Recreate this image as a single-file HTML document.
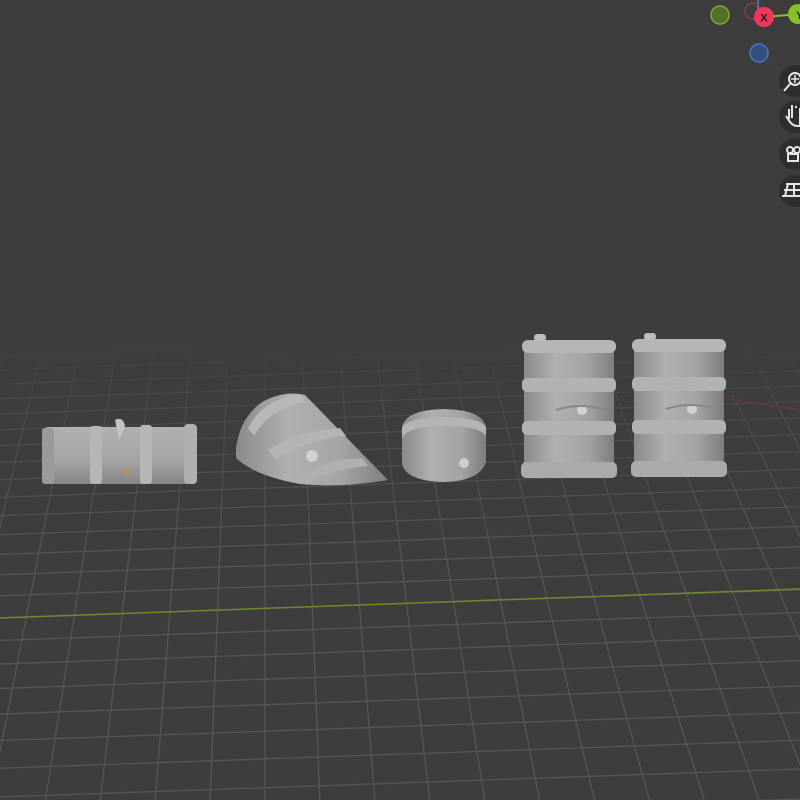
<!DOCTYPE html>
<html><head><meta charset="utf-8"><style>
html,body{margin:0;padding:0;background:#3d3d3d;width:800px;height:800px;overflow:hidden;font-family:"Liberation Sans",sans-serif}
svg{position:absolute;left:0;top:0}
</style></head><body>
<svg id="s" width="800" height="800" viewBox="0 0 800 800" xmlns="http://www.w3.org/2000/svg">
<defs>
<linearGradient id="fade" x1="0" y1="0" x2="0" y2="1">
<stop offset="0" stop-color="#fff" stop-opacity="0"/>
<stop offset="0.12" stop-color="#fff" stop-opacity="0.5"/>
<stop offset="0.5" stop-color="#fff" stop-opacity="1"/>
</linearGradient>
<mask id="m"><rect x="0" y="345" width="800" height="455" fill="url(#fade)"/></mask>
<linearGradient id="cyl" x1="0" y1="0" x2="1" y2="0">
<stop offset="0" stop-color="#8a8a8a"/><stop offset="0.35" stop-color="#b0b0b0"/><stop offset="0.7" stop-color="#a4a4a4"/><stop offset="1" stop-color="#7e7e7e"/>
</linearGradient>
<linearGradient id="cylv" x1="0" y1="0" x2="0" y2="1">
<stop offset="0" stop-color="#b0b0b0"/><stop offset="0.6" stop-color="#a4a4a4"/><stop offset="1" stop-color="#858585"/>
</linearGradient>
</defs>
<g id="grid" mask="url(#m)" stroke="#575757" stroke-width="1.2"></g>
<line x1="0" y1="618" x2="800" y2="589" stroke="#6b8a2e" stroke-width="1.5"/>
<line x1="690" y1="393" x2="800" y2="410" stroke="#6a3a3a" stroke-width="1.2"/>

<g>
<rect x="44" y="427" width="152" height="57" rx="4" fill="url(#cylv)"/>
<rect x="42" y="428" width="12" height="56" rx="3" fill="#9a9a9a"/>
<rect x="90" y="426" width="12" height="58" rx="3" fill="#b6b6b6"/>
<rect x="140" y="425" width="12" height="59" rx="3" fill="#b6b6b6"/>
<rect x="184" y="424" width="13" height="60" rx="4" fill="#b0b0b0"/>
<path d="M115 420 q8 -4 10 6 l-6 14 z" fill="#c4c4c4"/>
<circle cx="127" cy="472" r="2.5" fill="none" stroke="#e08a20" stroke-width="1.2"/>
</g>

<g>
<path d="M236 448 Q240 418 262 402 Q285 390 305 395 L388 480 Q340 488 300 484 Q255 476 236 458 Z" fill="url(#cyl)"/>
<path d="M248 428 Q262 400 300 394 L306 402 Q270 408 254 436 Z" fill="#b8b8b8"/>
<path d="M268 450 Q300 430 340 428 L346 436 Q305 440 276 460 Z" fill="#b4b4b4"/>
<path d="M295 478 Q330 458 362 458 L368 466 Q335 468 305 484 Z" fill="#b0b0b0"/>
<circle cx="312" cy="456" r="6" fill="#d0d0d0"/>
</g>

<g>
<path d="M402 428 Q404 410 444 409 Q484 410 486 428 L486 462 Q480 481 444 482 Q406 481 402 464 Z" fill="url(#cyl)"/>
<path d="M402 428 Q405 418 444 417 Q484 418 486 428 L486 436 Q480 426 444 426 Q408 426 402 438 Z" fill="#b4b4b4"/>
<circle cx="464" cy="463" r="5" fill="#cdcdcd"/>
</g>

<g id="b1">
<rect x="524" y="342" width="90" height="134" rx="5" fill="url(#cyl)"/>
<rect x="522" y="340" width="94" height="13" rx="6" fill="#b6b6b6"/>
<rect x="534" y="334" width="12" height="7" rx="3" fill="#bdbdbd"/>
<rect x="522" y="378" width="94" height="14" rx="5" fill="#b2b2b2"/>
<rect x="522" y="421" width="94" height="14" rx="5" fill="#b2b2b2"/>
<rect x="521" y="462" width="96" height="16" rx="5" fill="#aaaaaa"/>
<circle cx="582" cy="410" r="5" fill="#d2d2d2"/>
<path d="M556 410 q25 -8 50 0" stroke="#888" stroke-width="2" fill="none"/>
</g>
<use href="#b1" x="110" y="-1"/>

<line x1="758" y1="0" x2="758" y2="14" stroke="#4a73c0" stroke-width="2"/>
<line x1="764" y1="17" x2="800" y2="14" stroke="#7fbf30" stroke-width="2"/>
<circle cx="720" cy="15" r="9" fill="#56702a" stroke="#7fa83a" stroke-width="1.5"/>
<circle cx="753" cy="11" r="8" fill="none" stroke="#8a3d48" stroke-width="1.5"/>
<circle cx="759" cy="53" r="9" fill="#32507e" stroke="#4a73c0" stroke-width="1.5"/>
<circle cx="764" cy="17" r="10" fill="#f0365a"/>
<text x="764" y="21.5" font-size="11" font-weight="bold" fill="#222" text-anchor="middle">X</text>
<circle cx="798" cy="14" r="10" fill="#82c228"/>
<text x="796" y="19" font-size="11" font-weight="bold" fill="#222">Y</text>

<g fill="#2e2e2e">
<circle cx="795" cy="81" r="16"/><circle cx="795" cy="117" r="16"/><circle cx="795" cy="154" r="16"/><circle cx="795" cy="191" r="16"/>
</g>
<g stroke="#e6e6e6" fill="none" stroke-width="2">
<circle cx="795" cy="79" r="6"/><line x1="790" y1="84" x2="784" y2="91"/>
<line x1="795" y1="75" x2="795" y2="83" stroke-width="1.5"/><line x1="791" y1="79" x2="799" y2="79" stroke-width="1.5"/>
<path d="M786 116 l4 6 q3 4 8 4 l2 0 v-18 m-4 0 v-2 m-4 2 v10 m0 -10 v-3 m-3 4 v10" />
<circle cx="790" cy="150" r="3"/><circle cx="797" cy="150" r="3"/><rect x="788" y="154" width="10" height="7"/>
<path d="M786 184 h14 M784 190 h16 M782 196 h18 M788 184 l-3 12 M794 184 l0 12"/>
</g>
</svg>
<script>
var g=document.getElementById('grid'),ns='http://www.w3.org/2000/svg';
var h=-600,K=65000,vx=265,c=25.5;
function L(x1,y1,x2,y2){var l=document.createElementNS(ns,'line');l.setAttribute('x1',x1);l.setAttribute('y1',y1);l.setAttribute('x2',x2);l.setAttribute('y2',y2);g.appendChild(l);}
for(var z=44;z<75;z++){var y=h+K/z;if(y>=340&&y<=830)L(0,y+14,800,y-14);}
for(var i=-40;i<=40;i++){var x1=vx+i*(340-h)/c,x2=vx+i*(800-h)/c;L(x1,340,x2,800);}
</script>
</body></html>
